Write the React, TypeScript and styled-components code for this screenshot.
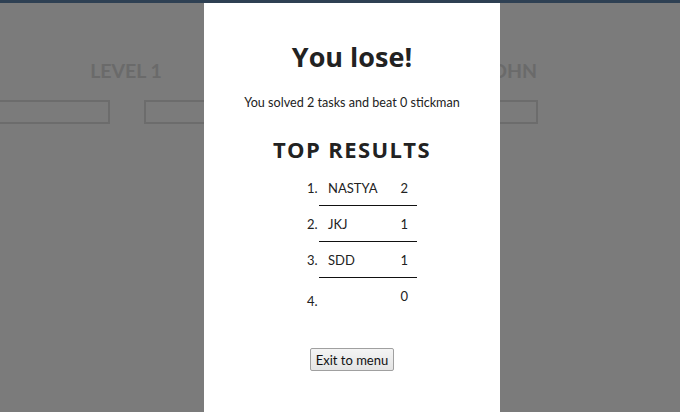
import styled, { createGlobalStyle } from 'styled-components';

const results = [
  { name: 'NASTYA', score: 2 },
  { name: 'JKJ', score: 1 },
  { name: 'SDD', score: 1 },
  { name: '', score: 0 },
];

const GlobalStyle = createGlobalStyle`
  html, body {
    margin: 0;
    padding: 0;
    background: #7b7b7b;
    font-family: Lato, "Liberation Sans", sans-serif;
  }
`;

function App() {
  return (
    <>
      <GlobalStyle />
      <Page>
        <TopBar />
        <Headings>
          <ColumnTitle>LEVEL 1</ColumnTitle>
          <ColumnTitle />
          <ColumnTitle>JOHN</ColumnTitle>
        </Headings>
        <Boxes>
          <AnswerBox />
          <AnswerBox />
          <AnswerBox />
        </Boxes>
        <Overlay>
          <Modal>
            <Title>You lose!</Title>
            <Summary>You solved 2 tasks and beat 0 stickman</Summary>
            <SubTitle>TOP RESULTS</SubTitle>
            <Results>
              {results.map((r, i) => (
                <Row key={i}>
                  <Place $empty={!r.name}>{i + 1}.</Place>
                  <Entry $last={i === results.length - 1}>
                    <span>{r.name}</span>
                    <span>{r.score}</span>
                  </Entry>
                </Row>
              ))}
            </Results>
            <ExitButton>Exit to menu</ExitButton>
          </Modal>
        </Overlay>
      </Page>
    </>
  );
}

const Page = styled.div`
  position: relative;
  width: 680px;
  height: 412px;
  overflow: hidden;
  background: #7b7b7b;
`;

const TopBar = styled.div`
  height: 3px;
  background: #2e4053;
`;

const Headings = styled.div`
  display: grid;
  grid-template-columns: repeat(3, 192px);
  padding-left: 30px;
  padding-top: 56px;
`;

const ColumnTitle = styled.div`
  text-align: center;
  font-family: Lato, sans-serif;
  font-weight: 700;
  font-size: 19.5px;
  line-height: 24px;
  min-height: 24px;
  color: #6a6a6a;
`;

const Boxes = styled.div`
  display: grid;
  grid-template-columns: repeat(3, 180px);
  column-gap: 34px;
  margin-left: -70px;
  margin-top: 17px;
`;

const AnswerBox = styled.div`
  height: 20px;
  border: 2px solid #6c6c6c;
`;

const Overlay = styled.div`
  position: absolute;
  inset: 3px 0 0 0;
  display: flex;
  justify-content: center;
`;

const Modal = styled.div`
  width: 296px;
  margin-left: 24px;
  background: #fff;
  display: flex;
  flex-direction: column;
  align-items: center;
  padding-top: 38px;
  color: #222;
`;

const Title = styled.h1`
  margin: 0;
  font-family: "Open Sans", sans-serif;
  font-weight: 700;
  font-size: 27px;
  line-height: 32px;
  color: #222;
`;

const Summary = styled.p`
  margin: 22px 0 0;
  font-size: 12.6px;
  line-height: 16px;
`;

const SubTitle = styled.h2`
  margin: 24px 0 0;
  font-family: "Open Sans", sans-serif;
  font-weight: 700;
  font-size: 22px;
  letter-spacing: 1.4px;
  line-height: 28px;
  color: #222;
`;

const Results = styled.div`
  margin-top: 7px;
  margin-left: 20px;
  display: flex;
  flex-direction: column;
`;

const Row = styled.div`
  display: flex;
  align-items: flex-start;
`;

const Place = styled.span<{ $empty: boolean }>`
  width: 12px;
  font-size: 13px;
  line-height: 16px;
  padding-top: ${(p) => (p.$empty ? '15px' : '10px')};
`;

const Entry = styled.div<{ $last: boolean }>`
  width: 98px;
  display: flex;
  justify-content: space-between;
  box-sizing: border-box;
  padding: 10px 9px 9px 9px;
  font-size: 13px;
  line-height: 16px;
  border-bottom: 1px solid ${(p) => (p.$last ? 'transparent' : '#111')};
`;

const ExitButton = styled.button`
  margin-top: 34px;
  height: 23px;
  padding: 0 5px;
  font-family: Lato, sans-serif;
  font-size: 13px;
  color: #111;
  background: linear-gradient(#f4f4f4, #e4e4e4);
  border: 1px solid #a0a0a0;
  border-radius: 2px;
`;

export default App;
